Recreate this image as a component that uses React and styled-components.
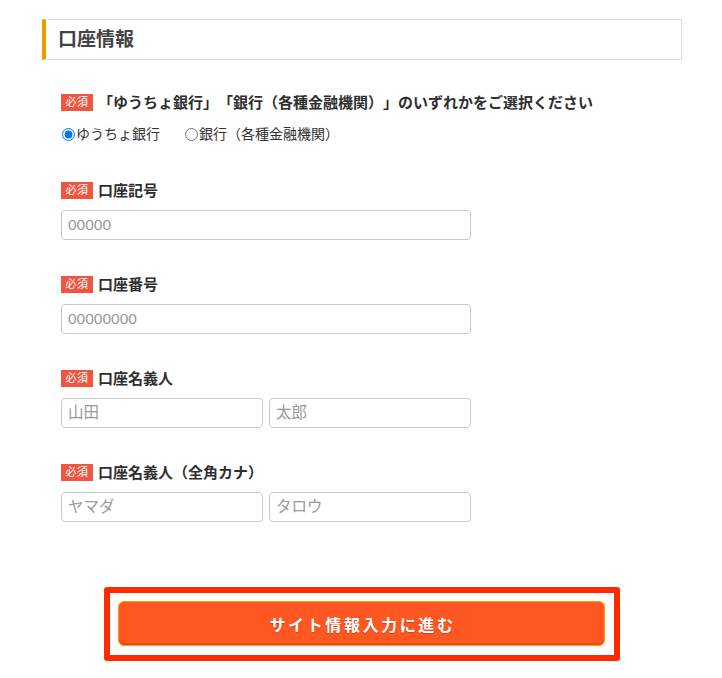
import React from "react";
import styled, { createGlobalStyle } from "styled-components";

const Global = createGlobalStyle`
  html, body { margin: 0; padding: 0; background: #fff; }
  body {
    font-family: "Liberation Sans", "Noto Sans CJK JP", sans-serif;
    color: #333;
    text-spacing-trim: space-all;
  }
  * { box-sizing: border-box; }
`;

const Page = styled.div`
  width: 722px;
  min-height: 678px;
  padding: 19px 0 0 42px;
`;

const Column = styled.div`
  width: 640px;
  display: flex;
  flex-direction: column;
`;

const SectionHeader = styled.h2`
  margin: 0;
  height: 41px;
  border: 1px solid #ddd;
  border-left: 4px solid #f39800;
  display: flex;
  align-items: center;
  padding-left: 12px;
  font-size: 19px;
  line-height: 1;
  font-weight: 700;
  color: #444;
`;

const Form = styled.div`
  padding-left: 19px;
  margin-top: 34px;
  display: flex;
  flex-direction: column;
`;

const Field = styled.div`
  display: flex;
  flex-direction: column;
  margin-bottom: ${(p) => p.$gap ?? 36}px;
`;

const LabelRow = styled.div`
  display: flex;
  align-items: center;
  gap: 5px;
  height: 17px;
`;

const Badge = styled.span`
  display: inline-flex;
  align-items: center;
  justify-content: center;
  width: 32px;
  height: 17px;
  background: #f0553f;
  color: #fff;
  font-size: 11px;
  line-height: 1;
  letter-spacing: 0.5px;
`;

const LabelText = styled.span`
  font-size: 15px;
  line-height: 17px;
  font-weight: 700;
  color: #2e2e2e;
  white-space: nowrap;
  text-spacing-trim: space-all;
`;

const RadioRow = styled.div`
  display: flex;
  align-items: center;
  height: 20px;
  margin-top: 13px;
`;

const RadioLabel = styled.label`
  display: inline-flex;
  align-items: center;
  font-size: 14px;
  line-height: 20px;
  color: #333;
  margin-right: 24px;
  cursor: pointer;
`;

const Radio = styled.input`
  margin: 0 1px 0 1px;
  width: 13px;
  height: 13px;
`;

const Input = styled.input`
  width: ${(p) => p.$w || 410}px;
  height: 30px;
  margin-top: 11px;
  border: 1px solid #c8c8c8;
  border-radius: 4px;
  padding: 0 6px;
  font-family: "Liberation Sans", "Noto Sans CJK JP", sans-serif;
  font-size: 15.5px;
  color: #333;
  background: #fff;
  outline: none;
  &::placeholder { color: #999; }
`;

const InputPair = styled.div`
  display: flex;
  gap: 6px;
`;

const ButtonArea = styled.div`
  display: flex;
  justify-content: center;
  margin-top: 65px;
`;

const Highlight = styled.div`
  border: 6px solid #ff2a00;
  border-radius: 3px;
  padding: 8px 9px 9px 8px;
`;

const SubmitButton = styled.button`
  width: 487px;
  height: 45px;
  border: 1px solid #f5a000;
  border-radius: 6px;
  background: #ff5722;
  box-shadow: inset 0 -2px 0 #e8491d;
  color: #fff;
  font-family: "Liberation Sans", "Noto Sans CJK JP", sans-serif;
  font-size: 16px;
  font-weight: 700;
  letter-spacing: 2.6px;
  text-shadow: 0 1px 1px rgba(120, 30, 0, 0.35);
  cursor: pointer;
  padding: 0 0 0 2px;
`;

function RequiredLabel({ children }) {
  return (
    <LabelRow>
      <Badge>必須</Badge>
      <LabelText>{children}</LabelText>
    </LabelRow>
  );
}

export default function App() {
  return (
    <>
      <Global />
      <Page>
        <Column>
          <SectionHeader>口座情報</SectionHeader>
          <Form>
            <Field $gap={38}>
              <RequiredLabel>
                「ゆうちょ銀行」「銀行（各種金融機関）」のいずれかをご選択ください
              </RequiredLabel>
              <RadioRow>
                <RadioLabel>
                  <Radio type="radio" name="bank" defaultChecked />
                  ゆうちょ銀行
                </RadioLabel>
                <RadioLabel>
                  <Radio type="radio" name="bank" />
                  銀行（各種金融機関）
                </RadioLabel>
              </RadioRow>
            </Field>

            <Field>
              <RequiredLabel>口座記号</RequiredLabel>
              <Input placeholder="00000" />
            </Field>

            <Field>
              <RequiredLabel>口座番号</RequiredLabel>
              <Input placeholder="00000000" />
            </Field>

            <Field>
              <RequiredLabel>口座名義人</RequiredLabel>
              <InputPair>
                <Input $w={202} placeholder="山田" />
                <Input $w={202} placeholder="太郎" />
              </InputPair>
            </Field>

            <Field $gap={0}>
              <RequiredLabel>口座名義人（全角カナ）</RequiredLabel>
              <InputPair>
                <Input $w={202} placeholder="ヤマダ" />
                <Input $w={202} placeholder="タロウ" />
              </InputPair>
            </Field>
          </Form>

          <ButtonArea>
            <Highlight>
              <SubmitButton type="button">サイト情報入力に進む</SubmitButton>
            </Highlight>
          </ButtonArea>
        </Column>
      </Page>
    </>
  );
}
